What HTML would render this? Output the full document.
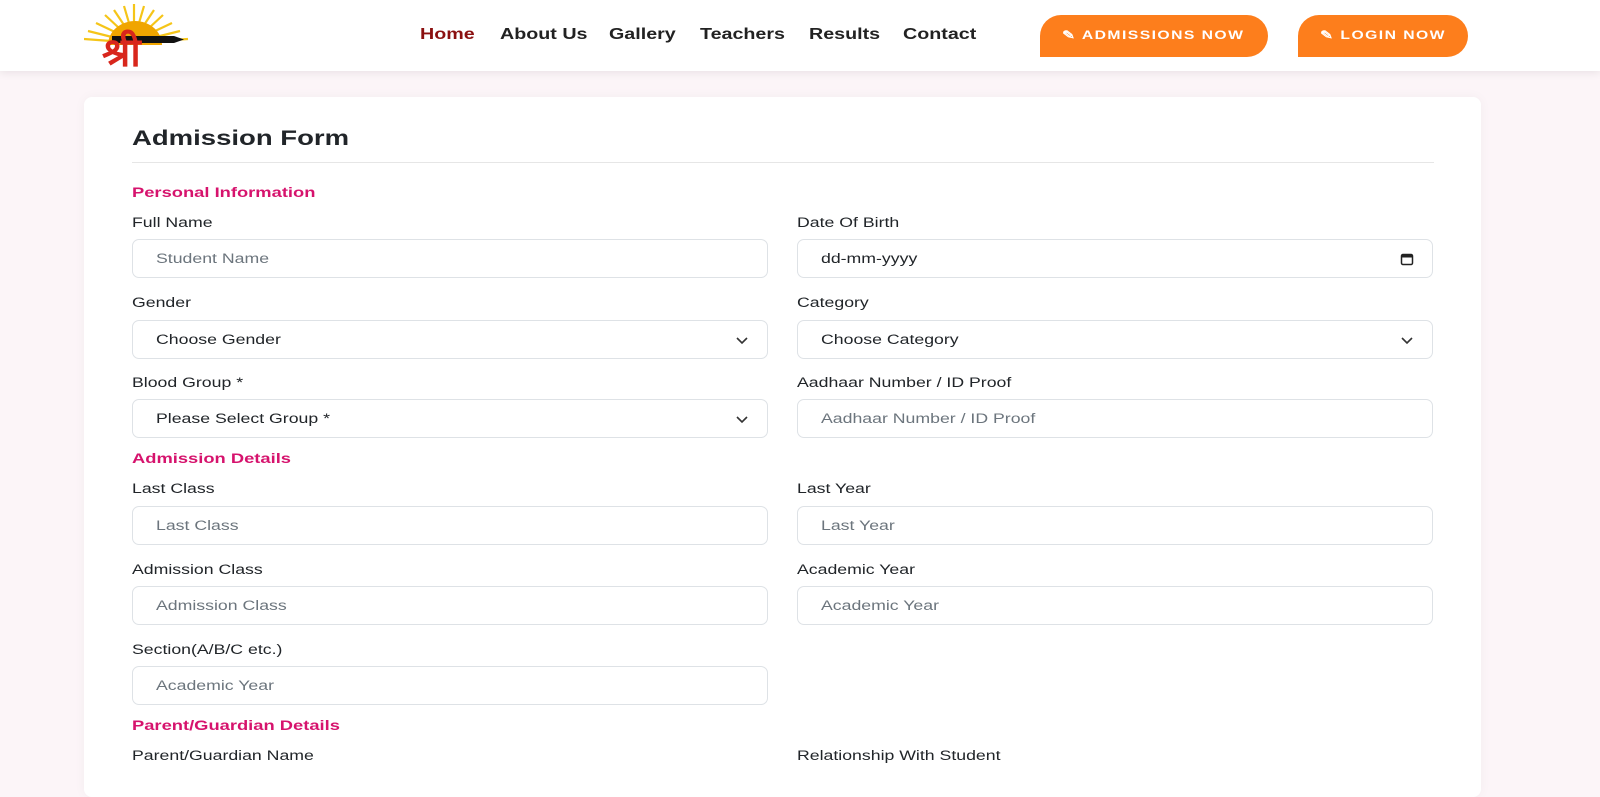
<!DOCTYPE html>
<html><head><meta charset="utf-8"><style>
*{box-sizing:border-box;margin:0;padding:0}
body{width:1600px;height:775px;overflow:hidden;background:#fcf5f8;font-family:"Liberation Sans","Noto Sans CJK SC",sans-serif;position:relative;color:#212529}
.a{position:absolute;white-space:nowrap}
.t{display:inline-block;transform:scaleX(1.31);transform-origin:left center}
header{position:absolute;left:0;top:0;width:1600px;height:71px;background:#fff;box-shadow:0 2px 8px rgba(0,0,0,.08)}
.nav{font-size:15.5px;font-weight:bold;color:#222;top:26px}
.nav .t{transform:scaleX(1.27)}
.btn{background:#fd7e1c;color:#fff;height:42px;top:15px;border-radius:22px 22px 22px 0;font-size:12px;font-weight:bold;letter-spacing:1.1px;padding-top:13px;padding-left:22px}
.card{position:absolute;left:84px;top:97px;width:1397px;height:700px;background:#fff;border-radius:8px;box-shadow:0 0 12px rgba(0,0,0,.04)}
.sec{color:#d6136d;font-size:14px;font-weight:bold;left:132px}
.lb{font-size:13.5px;color:#212529}
.in{position:absolute;width:636px;height:39px;border:1px solid #dee2e6;border-radius:7px;background:#fff;font-size:13.5px;color:#6c757d;padding:11px 0 0 23px}
.in.s{color:#212529}
.chev{position:absolute;right:18px;top:12px}
</style></head><body>
<header>
<svg class="a" style="left:84px;top:3px" width="110" height="66" viewBox="0 0 110 66">
<g stroke="#f5c518" stroke-width="2.2">
<line x1="50" y1="20" x2="50" y2="1"/><line x1="45" y1="20" x2="40" y2="3"/><line x1="55" y1="20" x2="60" y2="3"/>
<line x1="40" y1="22" x2="30" y2="7"/><line x1="60" y1="22" x2="70" y2="7"/><line x1="35" y1="25" x2="21" y2="12"/>
<line x1="65" y1="25" x2="79" y2="12"/><line x1="31" y1="29" x2="12" y2="20"/><line x1="69" y1="29" x2="88" y2="20"/>
<line x1="28" y1="34" x2="4" y2="28"/><line x1="72" y1="34" x2="96" y2="28"/><line x1="27" y1="38" x2="0" y2="36"/><line x1="73" y1="38" x2="104" y2="36"/></g>
<path d="M24 42 A27 24 0 0 1 78 42 Z" fill="#f0a500"/>
<rect x="28" y="33" width="62" height="7" fill="#111"/><polygon points="90,33 100,36.5 90,40" fill="#111"/>
<text x="18" y="63" font-family="Liberation Serif,'Noto Sans CJK SC',serif" font-weight="bold" font-size="40" fill="#d8261c">श्री</text>
</svg>
<div class="a nav" style="left:420px;color:#8b1010"><span class="t">Home</span></div>
<div class="a nav" style="left:500px"><span class="t">About Us</span></div>
<div class="a nav" style="left:609px"><span class="t">Gallery</span></div>
<div class="a nav" style="left:700px"><span class="t">Teachers</span></div>
<div class="a nav" style="left:809px"><span class="t">Results</span></div>
<div class="a nav" style="left:903px"><span class="t">Contact</span></div>
<div class="a btn" style="left:1040px;width:228px"><span class="t">✎ ADMISSIONS NOW</span></div>
<div class="a btn" style="left:1298px;width:170px"><span class="t">✎ LOGIN NOW</span></div>
</header>
<div class="card"></div>
<div class="a" style="left:132px;top:127px;font-size:21px;font-weight:bold"><span class="t">Admission Form</span></div>
<div class="a" style="left:132px;top:162px;width:1302px;height:1px;background:#e6e6e6"></div>

<div class="a sec" style="top:184px"><span class="t">Personal Information</span></div>
<div class="a lb" style="left:132px;top:215px"><span class="t">Full Name</span></div>
<div class="a lb" style="left:797px;top:215px"><span class="t">Date Of Birth</span></div>
<div class="in" style="left:132px;top:239px"><span class="t">Student Name</span></div>
<div class="in s" style="left:797px;top:239px"><span class="t">dd-mm-yyyy</span><svg class="chev" width="14" height="14" viewBox="0 0 14 14"><rect x="1.5" y="2.5" width="11" height="10" rx="1.5" fill="none" stroke="#222" stroke-width="1.5"/><rect x="1.5" y="2.5" width="11" height="3" fill="#222"/></svg></div>

<div class="a lb" style="left:132px;top:295px"><span class="t">Gender</span></div>
<div class="a lb" style="left:797px;top:295px"><span class="t">Category</span></div>
<div class="in s" style="left:132px;top:320px"><span class="t">Choose Gender</span><svg class="chev" width="14" height="14" viewBox="0 0 14 14"><path d="M2 5l5 5 5-5" fill="none" stroke="#333" stroke-width="1.6"/></svg></div>
<div class="in s" style="left:797px;top:320px"><span class="t">Choose Category</span><svg class="chev" width="14" height="14" viewBox="0 0 14 14"><path d="M2 5l5 5 5-5" fill="none" stroke="#333" stroke-width="1.6"/></svg></div>

<div class="a lb" style="left:132px;top:375px"><span class="t">Blood Group *</span></div>
<div class="a lb" style="left:797px;top:375px"><span class="t">Aadhaar Number / ID Proof</span></div>
<div class="in s" style="left:132px;top:399px"><span class="t">Please Select Group *</span><svg class="chev" width="14" height="14" viewBox="0 0 14 14"><path d="M2 5l5 5 5-5" fill="none" stroke="#333" stroke-width="1.6"/></svg></div>
<div class="in" style="left:797px;top:399px"><span class="t">Aadhaar Number / ID Proof</span></div>

<div class="a sec" style="top:450px"><span class="t">Admission Details</span></div>
<div class="a lb" style="left:132px;top:481px"><span class="t">Last Class</span></div>
<div class="a lb" style="left:797px;top:481px"><span class="t">Last Year</span></div>
<div class="in" style="left:132px;top:506px"><span class="t">Last Class</span></div>
<div class="in" style="left:797px;top:506px"><span class="t">Last Year</span></div>

<div class="a lb" style="left:132px;top:562px"><span class="t">Admission Class</span></div>
<div class="a lb" style="left:797px;top:562px"><span class="t">Academic Year</span></div>
<div class="in" style="left:132px;top:586px"><span class="t">Admission Class</span></div>
<div class="in" style="left:797px;top:586px"><span class="t">Academic Year</span></div>

<div class="a lb" style="left:132px;top:642px"><span class="t">Section(A/B/C etc.)</span></div>
<div class="in" style="left:132px;top:666px"><span class="t">Academic Year</span></div>

<div class="a sec" style="top:717px"><span class="t">Parent/Guardian Details</span></div>
<div class="a lb" style="left:132px;top:748px"><span class="t">Parent/Guardian Name</span></div>
<div class="a lb" style="left:797px;top:748px"><span class="t">Relationship With Student</span></div>
</body></html>
